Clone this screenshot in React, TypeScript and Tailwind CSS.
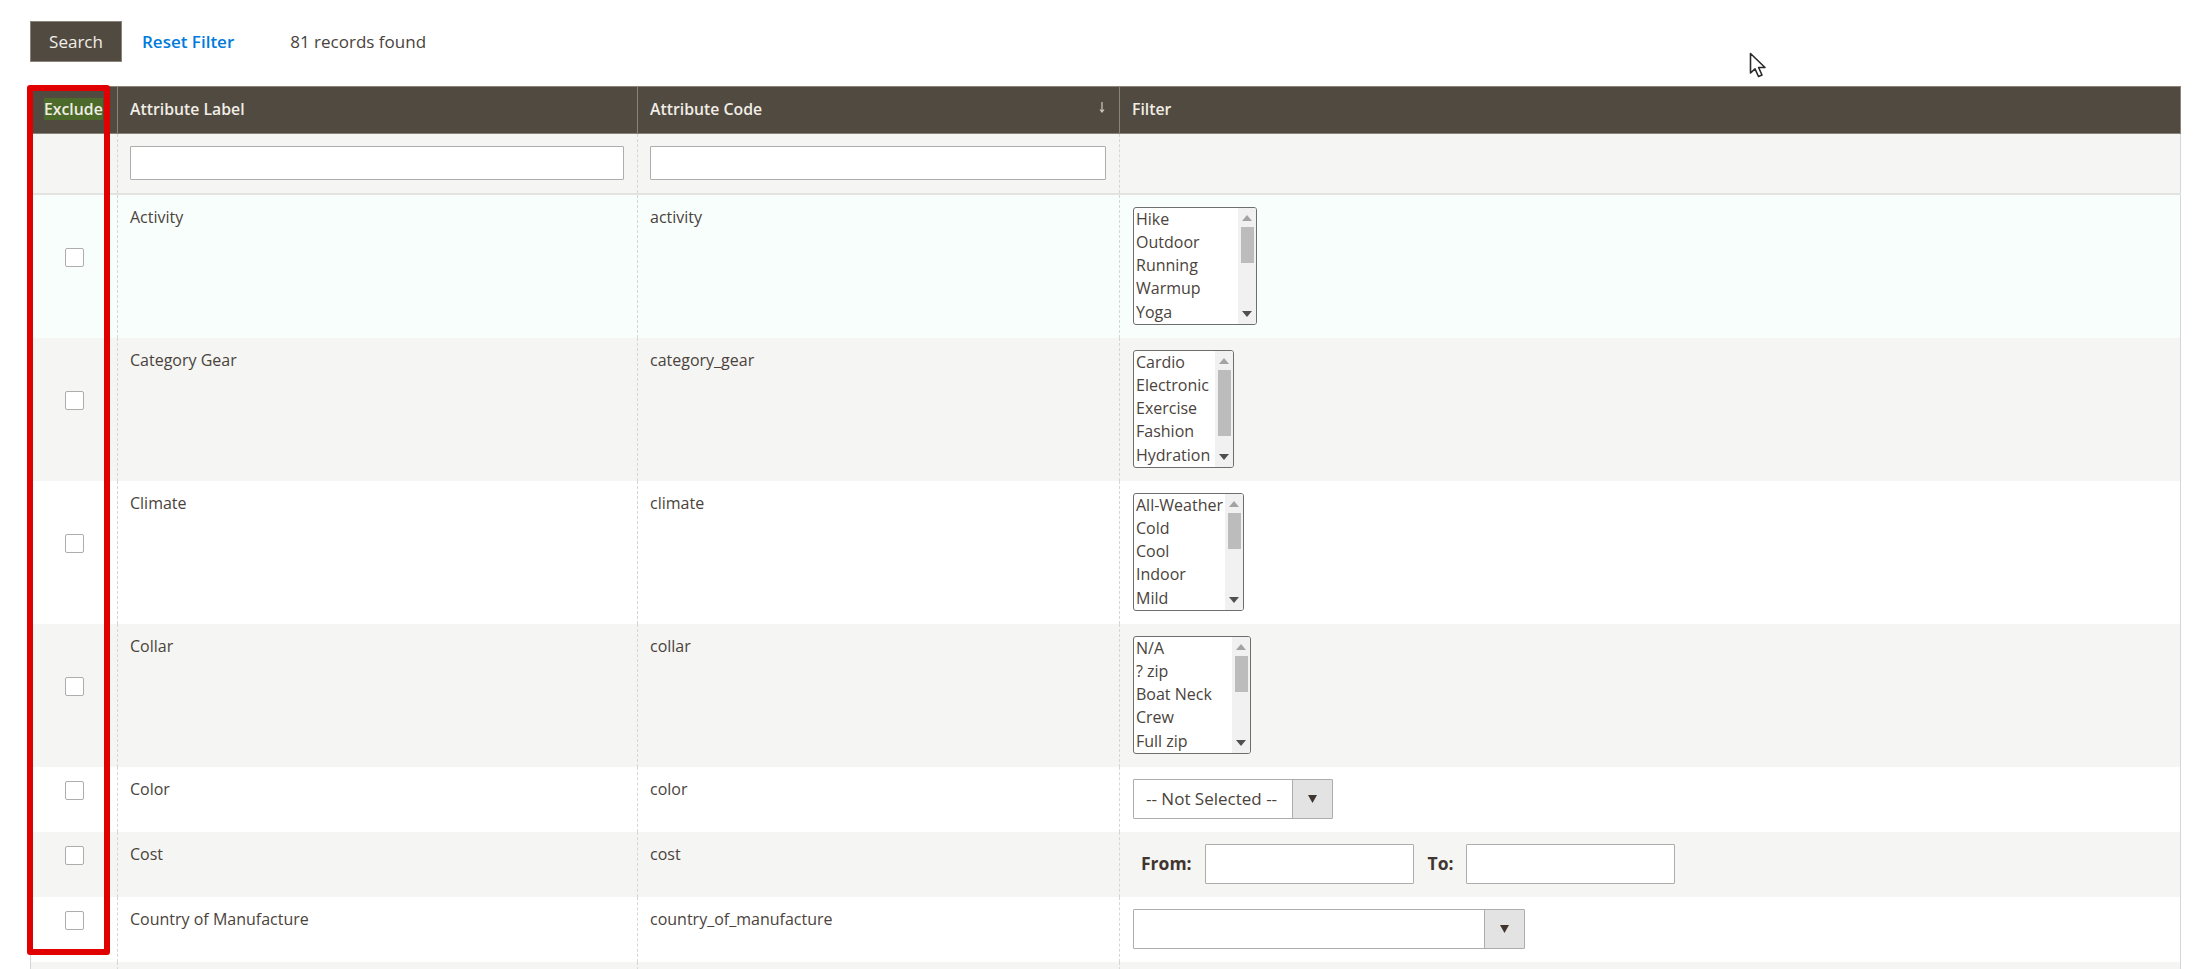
import React from 'react';

const Listbox = ({ width, items, thumb }: { width: string; items: string[]; thumb: string }) => (
  <div className={`flex h-[118px] ${width} overflow-hidden rounded-[3px] border-[1.5px] border-[#6e6e6e] bg-white`}>
    <div className="flex-1 overflow-hidden pl-[2px]">
      {items.map((item) => (
        <div key={item} className="h-[23.3px] whitespace-nowrap text-[16px] leading-[23.3px] text-[#4a433c]">
          {item}
        </div>
      ))}
    </div>
    <div className="flex w-[18px] shrink-0 flex-col items-center bg-[#f1f1f1]">
      <svg className="mt-[7px] shrink-0" width="10" height="6" viewBox="0 0 10 6">
        <path d="M5 0 10 6H0Z" fill="#a3a3a3" />
      </svg>
      <div className={`mt-[6px] w-[13px] bg-[#bcbcbc] ${thumb}`} />
      <svg className="mb-[7px] mt-auto shrink-0" width="10" height="6" viewBox="0 0 10 6">
        <path d="M0 0H10L5 6Z" fill="#505050" />
      </svg>
    </div>
  </div>
);

const Dropdown = ({ width, label }: { width: string; label?: string }) => (
  <div className={`flex h-[40px] ${width} overflow-hidden rounded-[1px] border border-[#adadad] bg-white`}>
    <div className="flex-1 whitespace-nowrap pl-[12px] text-[17px] leading-[38px] text-[#4a433c]">{label}</div>
    <div className="flex w-[40px] items-center justify-center border-l border-[#adadad] bg-[#e3e3e3]">
      <svg width="9" height="8" viewBox="0 0 9 8">
        <path d="M0 0H9L4.5 8Z" fill="#41362f" />
      </svg>
    </div>
  </div>
);

const RangeFilter = () => (
  <div className="flex h-[40px] items-center text-[17.5px] font-bold text-[#41362f]">
    <span className="ml-[8px] w-[63.5px]">From:</span>
    <input className="h-[40px] w-[209px] rounded-[1px] border border-[#adadad] bg-white" />
    <span className="ml-[14px] w-[38px]">To:</span>
    <input className="h-[40px] w-[209px] rounded-[1px] border border-[#adadad] bg-white" />
  </div>
);

const rows = [
  {
    label: 'Activity',
    code: 'activity',
    height: 'h-[144px]',
    bg: 'bg-[#f8fefc]',
    filter: <Listbox width="w-[124px]" thumb="h-[36px]" items={['Hike', 'Outdoor', 'Running', 'Warmup', 'Yoga']} />,
  },
  {
    label: 'Category Gear',
    code: 'category_gear',
    height: 'h-[143px]',
    bg: 'bg-[#f5f5f3]',
    filter: <Listbox width="w-[101px]" thumb="h-[66px]" items={['Cardio', 'Electronic', 'Exercise', 'Fashion', 'Hydration']} />,
  },
  {
    label: 'Climate',
    code: 'climate',
    height: 'h-[143px]',
    bg: 'bg-white',
    filter: <Listbox width="w-[111px]" thumb="h-[36px]" items={['All-Weather', 'Cold', 'Cool', 'Indoor', 'Mild']} />,
  },
  {
    label: 'Collar',
    code: 'collar',
    height: 'h-[143px]',
    bg: 'bg-[#f5f5f3]',
    filter: <Listbox width="w-[118px]" thumb="h-[36px]" items={['N/A', '? zip', 'Boat Neck', 'Crew', 'Full zip']} />,
  },
  {
    label: 'Color',
    code: 'color',
    height: 'h-[65px]',
    bg: 'bg-white',
    filter: <Dropdown width="w-[200px]" label="-- Not Selected --" />,
  },
  {
    label: 'Cost',
    code: 'cost',
    height: 'h-[65px]',
    bg: 'bg-[#f5f5f3]',
    filter: <RangeFilter />,
  },
  {
    label: 'Country of Manufacture',
    code: 'country_of_manufacture',
    height: 'h-[65px]',
    bg: 'bg-white',
    filter: <Dropdown width="w-[392px]" />,
  },
];

export default function App() {
  return (
    <div className="relative h-screen overflow-hidden bg-white pl-[30px] pr-[15px] font-['Open_Sans',sans-serif] text-[16px] text-[#4a433c]">
      <div className="flex h-[86px] items-start pt-[21px] text-[17px]">
        <button className="h-[41px] w-[92px] border border-[#8a8378] bg-[#514a40] text-[17px] text-[#f2efe9]">Search</button>
        <a className="ml-[20px] font-semibold leading-[41px] text-[#007bdb]">Reset Filter</a>
        <span className="ml-[56px] leading-[41px]">81 records found</span>
      </div>

      <table className="w-[2151px] table-fixed border-collapse border-x border-[#d6d6d6]">
        <colgroup>
          <col className="w-[87px]" />
          <col className="w-[520px]" />
          <col className="w-[482px]" />
          <col />
        </colgroup>
        <thead>
          <tr className="h-[47px] bg-[#514a40] text-left text-[15.8px] font-semibold text-[#f0ede6]">
            <th className="border border-[#8a8378] pl-[13px] font-semibold">
              <span className="inline-block h-[22px] bg-[#4c6a2a] leading-[22px]">Exclude</span>
            </th>
            <th className="border border-[#8a8378] pl-[12px] font-semibold">Attribute Label</th>
            <th className="relative border border-[#8a8378] pl-[12px] font-semibold">
              Attribute Code
              <svg className="absolute right-[14px] top-[15px]" width="6" height="11" viewBox="0 0 6 11">
                <path d="M3 0V9M1 7.5 3 10 5 7.5" fill="none" stroke="#cfcabf" strokeWidth="1.2" />
              </svg>
            </th>
            <th className="border border-[#8a8378] pl-[12px] font-semibold">Filter</th>
          </tr>
        </thead>
        <tbody>
          <tr className="h-[60px] border-b-2 border-[#e3e3e1] bg-[#f5f5f3]">
            <td />
            <td className="border-l border-dashed border-[#d6d6d6] pb-[1px] pl-[12px] pr-[13px]">
              <input className="block h-[34px] w-full rounded-[1px] border border-[#adadad] bg-white" />
            </td>
            <td className="border-l border-dashed border-[#d6d6d6] pb-[1px] pl-[12px] pr-[13px]">
              <input className="block h-[34px] w-full rounded-[1px] border border-[#adadad] bg-white" />
            </td>
            <td className="border-l border-dashed border-[#d6d6d6]" />
          </tr>
          {rows.map((row) => (
            <tr key={row.code} className={`${row.height} ${row.bg}`}>
              <td className="pb-[17px] align-middle">
                <div className="ml-[34px] h-[19px] w-[19px] rounded-[2px] border border-[#adadad] bg-white" />
              </td>
              <td className="border-l border-dashed border-[#d6d6d6] px-[12px] pt-[10px] align-top">{row.label}</td>
              <td className="border-l border-dashed border-[#d6d6d6] px-[12px] pt-[10px] align-top">{row.code}</td>
              <td className="border-l border-dashed border-[#d6d6d6] pl-[13px] pt-[12px] align-top">{row.filter}</td>
            </tr>
          ))}
          <tr className="h-[65px] bg-[#f5f5f3]">
            <td />
            <td className="border-l border-dashed border-[#d6d6d6]" />
            <td className="border-l border-dashed border-[#d6d6d6]" />
            <td className="border-l border-dashed border-[#d6d6d6]" />
          </tr>
        </tbody>
      </table>

      {/* annotation over the first column */}
      <div className="absolute left-[27px] top-[85px] h-[870px] w-[83px] rounded-[3px] border-[6px] border-[#e00000]" />

      {/* mouse pointer */}
      <svg className="absolute left-[1749px] top-[52px]" width="18" height="26" viewBox="0 0 18 26">
        <path d="M1.5 1.5V21L6 16.8 9.5 24.5 13 23 9.6 15.5H16Z" fill="white" stroke="#2a2a2a" strokeWidth="1.6" strokeLinejoin="round" />
      </svg>
    </div>
  );
}
